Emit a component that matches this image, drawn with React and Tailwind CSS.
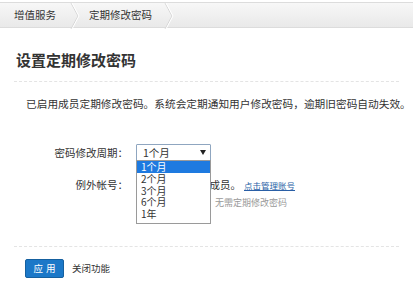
import React from "react";

function Crumb({ children, first }) {
  return (
    <div className="relative flex items-center h-full pr-[12px]">
      <span className={first ? "pl-[14px] pr-[12px]" : "pl-[9px] pr-[10px]"}>{children}</span>
      <svg width="10" height="26" viewBox="0 0 10 26" className="absolute right-0 top-0">
        <path d="M1 0 L8 13 L1 26" fill="none" stroke="#d6d6d6" strokeWidth="1" />
        <path d="M2 0 L9 13 L2 26" fill="none" stroke="#ffffff" strokeWidth="1" />
      </svg>
    </div>
  );
}

export default function App() {
  return (
    <div
      className="w-[413px] h-[292px] bg-white overflow-hidden text-[#333]"
      style={{ fontFamily: '"Noto Sans CJK SC", "Noto Sans", sans-serif' }}
    >
      <div className="mt-[2px] h-[26px] flex items-center bg-gradient-to-b from-[#f7f7f7] to-[#e9e9e9] border-t border-b border-[#dcdcdc] text-[10.5px]">
        <Crumb first>增值服务</Crumb>
        <Crumb>定期修改密码</Crumb>
      </div>

      <h1 className="mt-[22px] ml-[16px] text-[15px] font-bold leading-[20px] text-[#333]">
        设置定期修改密码
      </h1>
      <div className="mt-[11px] mx-[14px] border-t border-dashed border-[#e4e4e4]" />

      <p className="mt-[15px] ml-[26px] text-[10.7px] leading-[14px] whitespace-nowrap">
        已启用成员定期修改密码。系统会定期通知用户修改密码，逾期旧密码自动失效。
      </p>

      <div className="mt-[33px] flex items-center text-[10.5px]">
        <div className="w-[128px] text-right">密码修改周期：</div>
        <div className="relative ml-[8px]">
          <div className="w-[75px] h-[17px] border border-[#8fa6c0] rounded-[1px] flex items-center justify-between pl-[6px] pr-[4px] bg-white text-[10.5px]">
            <span>1个月</span>
            <svg width="6" height="5" viewBox="0 0 6 5">
              <path d="M0 0 L6 0 L3 5 Z" fill="#222" />
            </svg>
          </div>
          <div className="absolute left-0 top-[16px] z-10 w-[75px] bg-white border border-[#9a9a9a] text-[10px] pb-[4px]">
            <div className="bg-[#1e7ae0] text-white pl-[4px] h-[12px] leading-[12px]">1个月</div>
            <div className="pl-[4px] h-[11.5px] leading-[11.5px]">2个月</div>
            <div className="pl-[4px] h-[11.5px] leading-[11.5px]">3个月</div>
            <div className="pl-[4px] h-[11.5px] leading-[11.5px]">6个月</div>
            <div className="pl-[4px] h-[11.5px] leading-[11.5px]">1年</div>
          </div>
        </div>
      </div>

      <div className="mt-[17px] flex text-[10.5px]">
        <div className="w-[128px] text-right leading-[14px]">例外帐号：</div>
        <div className="ml-[8px]">
          <div className="flex items-baseline leading-[14px]">
            <span>暂无设置的例外成员。</span>
            <a className="ml-[3px] text-[8.5px] text-[#2a5fa6] underline">点击管理账号</a>
          </div>
          <div className="mt-[5px] ml-[79px] text-[9px] text-[#999] leading-[12px]">无需定期修改密码</div>
        </div>
      </div>

      <div className="mt-[37px] mx-[14px] border-t border-dashed border-[#e4e4e4]" />

      <div className="mt-[12px] ml-[25px] flex items-center">
        <button className="w-[39px] h-[19px] bg-[#1b78c8] border border-[#15609f] rounded-[2px] text-white text-[9.5px] tracking-[3px] pl-[3px]">
          应用
        </button>
        <a className="ml-[8px] text-[9.5px] text-[#333]">关闭功能</a>
      </div>
    </div>
  );
}
